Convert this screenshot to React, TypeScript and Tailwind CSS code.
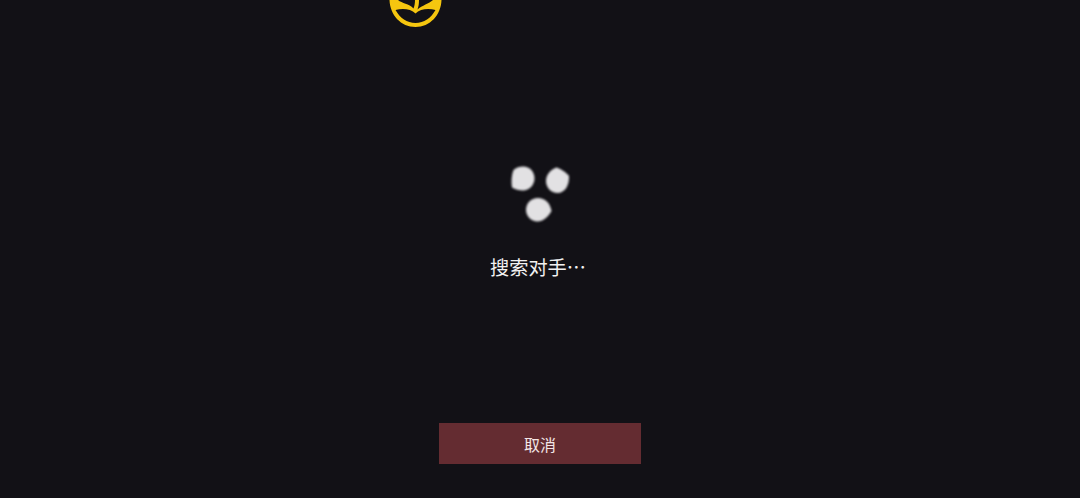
export default function App() {
  return (
    <div className="relative h-[498px] w-[1080px] overflow-hidden bg-[#121116] font-['Noto_Sans_CJK_SC','Noto_Sans',sans-serif] text-white">
      {/* logo is cut off by the top edge */}
      <svg className="absolute left-[385px] top-0" width="60" height="30" viewBox="0 0 60 30">
        <path
          d="M4.5 0 C5 15 16 27 30.5 27 C45 27 56 15 56.5 0 Z M13 0 C17 3.5 24 3.5 28.5 8.5 C29.5 6 30 3 30 0 Z M34 0 C34 4 33.5 6.5 32.5 9.5 C37 5.5 44 3.5 48 0 Z M10.5 10 C17 8 26 8.5 30.5 13.5 C35 8.5 44 8 50.5 10 C46 18 39 23 30.5 23 C22 23 15 18 10.5 10 Z"
          fill="#f5c60f"
          fillRule="evenodd"
        />
      </svg>

      <div className="flex h-full flex-col items-center">
        <div className="mt-[165px] blur-[1px]">
          <svg width="62" height="60" viewBox="0 0 62 60">
            <path d="M4.5 5 C7 2.5 11 1.5 14 1.5 C21 1.5 25.5 7 25.5 13.5 C25.5 20 20 25.5 14 25.5 C10 25.5 6 24.5 3 22.5 C2 17 2.5 10 4.5 5 Z" fill="#e2e1e3" />
            <path d="M47.5 2.5 C51 3.5 57 7 60 11 C60.5 20 56 28 48.5 28 C42 28 37 22.5 37 16 C37 10 41 5 47.5 2.5 Z" fill="#e2e1e3" />
            <path d="M29 33 C36 33 41 38 42.5 46 C39 52 34 56.5 28.5 56.5 C22 56.5 17 51 17 45 C17 38 22 33 29 33 Z" fill="#e2e1e3" />
          </svg>
        </div>
        <p className="mt-[28px] ml-[-4px] text-[19.2px] leading-[28px] text-[#f2f2f2]">搜索对手…</p>
        <button className="mt-[142px] h-[41px] w-[202px] bg-[#642c31] text-[16px] text-[#f3e6e6]">取消</button>
      </div>
    </div>
  );
}
